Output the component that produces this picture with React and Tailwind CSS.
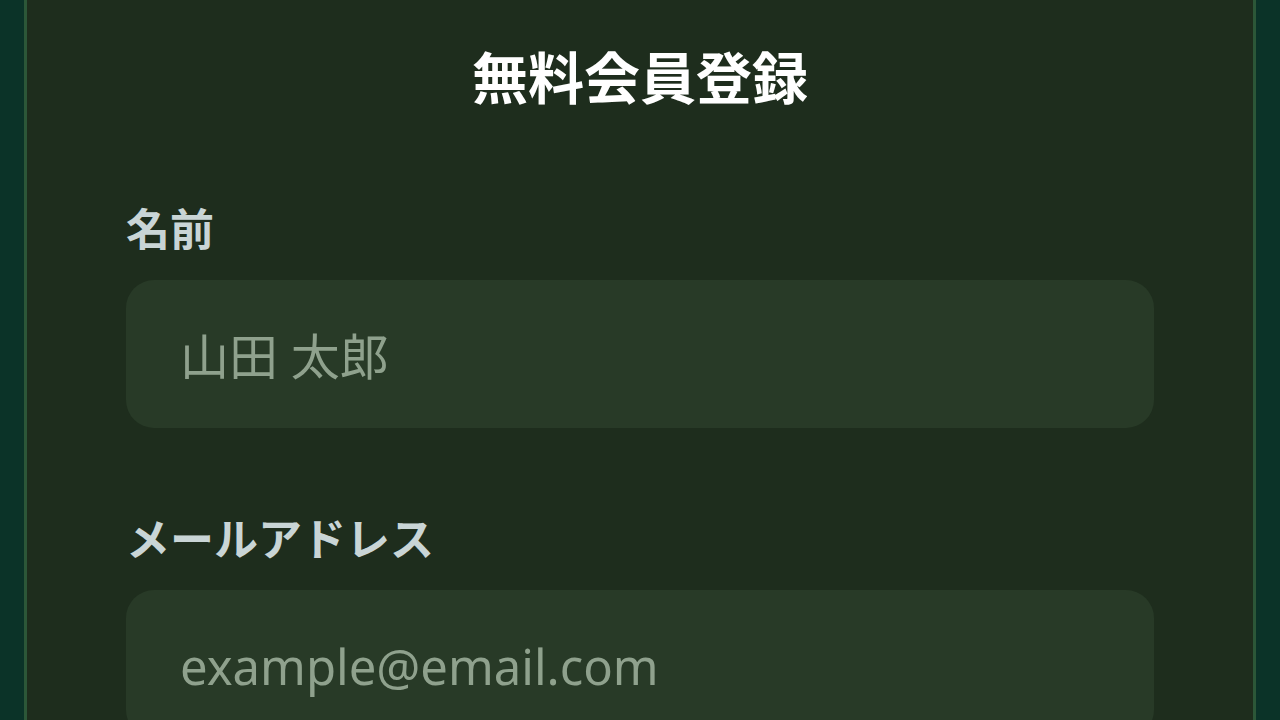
export default function App() {
  const font = { fontFamily: '"Noto Sans", "Noto Sans CJK JP", sans-serif' }
  return (
    <div className="h-[720px] w-full overflow-hidden bg-[#0b3328] px-[24px]" style={font}>
      <div className="h-full border-x-[3px] border-[#2c5738] bg-[#1e2d1d] px-[99px]">
        <h1 className="pt-[40px] text-center text-[56px] font-bold leading-[74px] text-white">
          無料会員登録
        </h1>

        <div className="mt-[85px]">
          <label className="block text-[44px] font-semibold leading-[60px] text-[#c9d5d6]">名前</label>
          <input
            type="text"
            placeholder="山田 太郎"
            className="mt-[21px] h-[148px] w-full rounded-[28px] bg-[#283a27] px-[54px] pt-[4px] text-[49px] text-white outline-none placeholder:text-[#8fa18d]"
          />
        </div>

        <div className="mt-[81px]">
          <label className="block text-[44px] font-semibold leading-[60px] text-[#c9d5d6]">メールアドレス</label>
          <input
            type="email"
            placeholder="example@email.com"
            className="mt-[21px] h-[148px] w-full rounded-[28px] bg-[#283a27] px-[54px] pt-[4px] text-[49px] text-white outline-none placeholder:text-[#8fa18d]"
          />
        </div>
      </div>
    </div>
  )
}
